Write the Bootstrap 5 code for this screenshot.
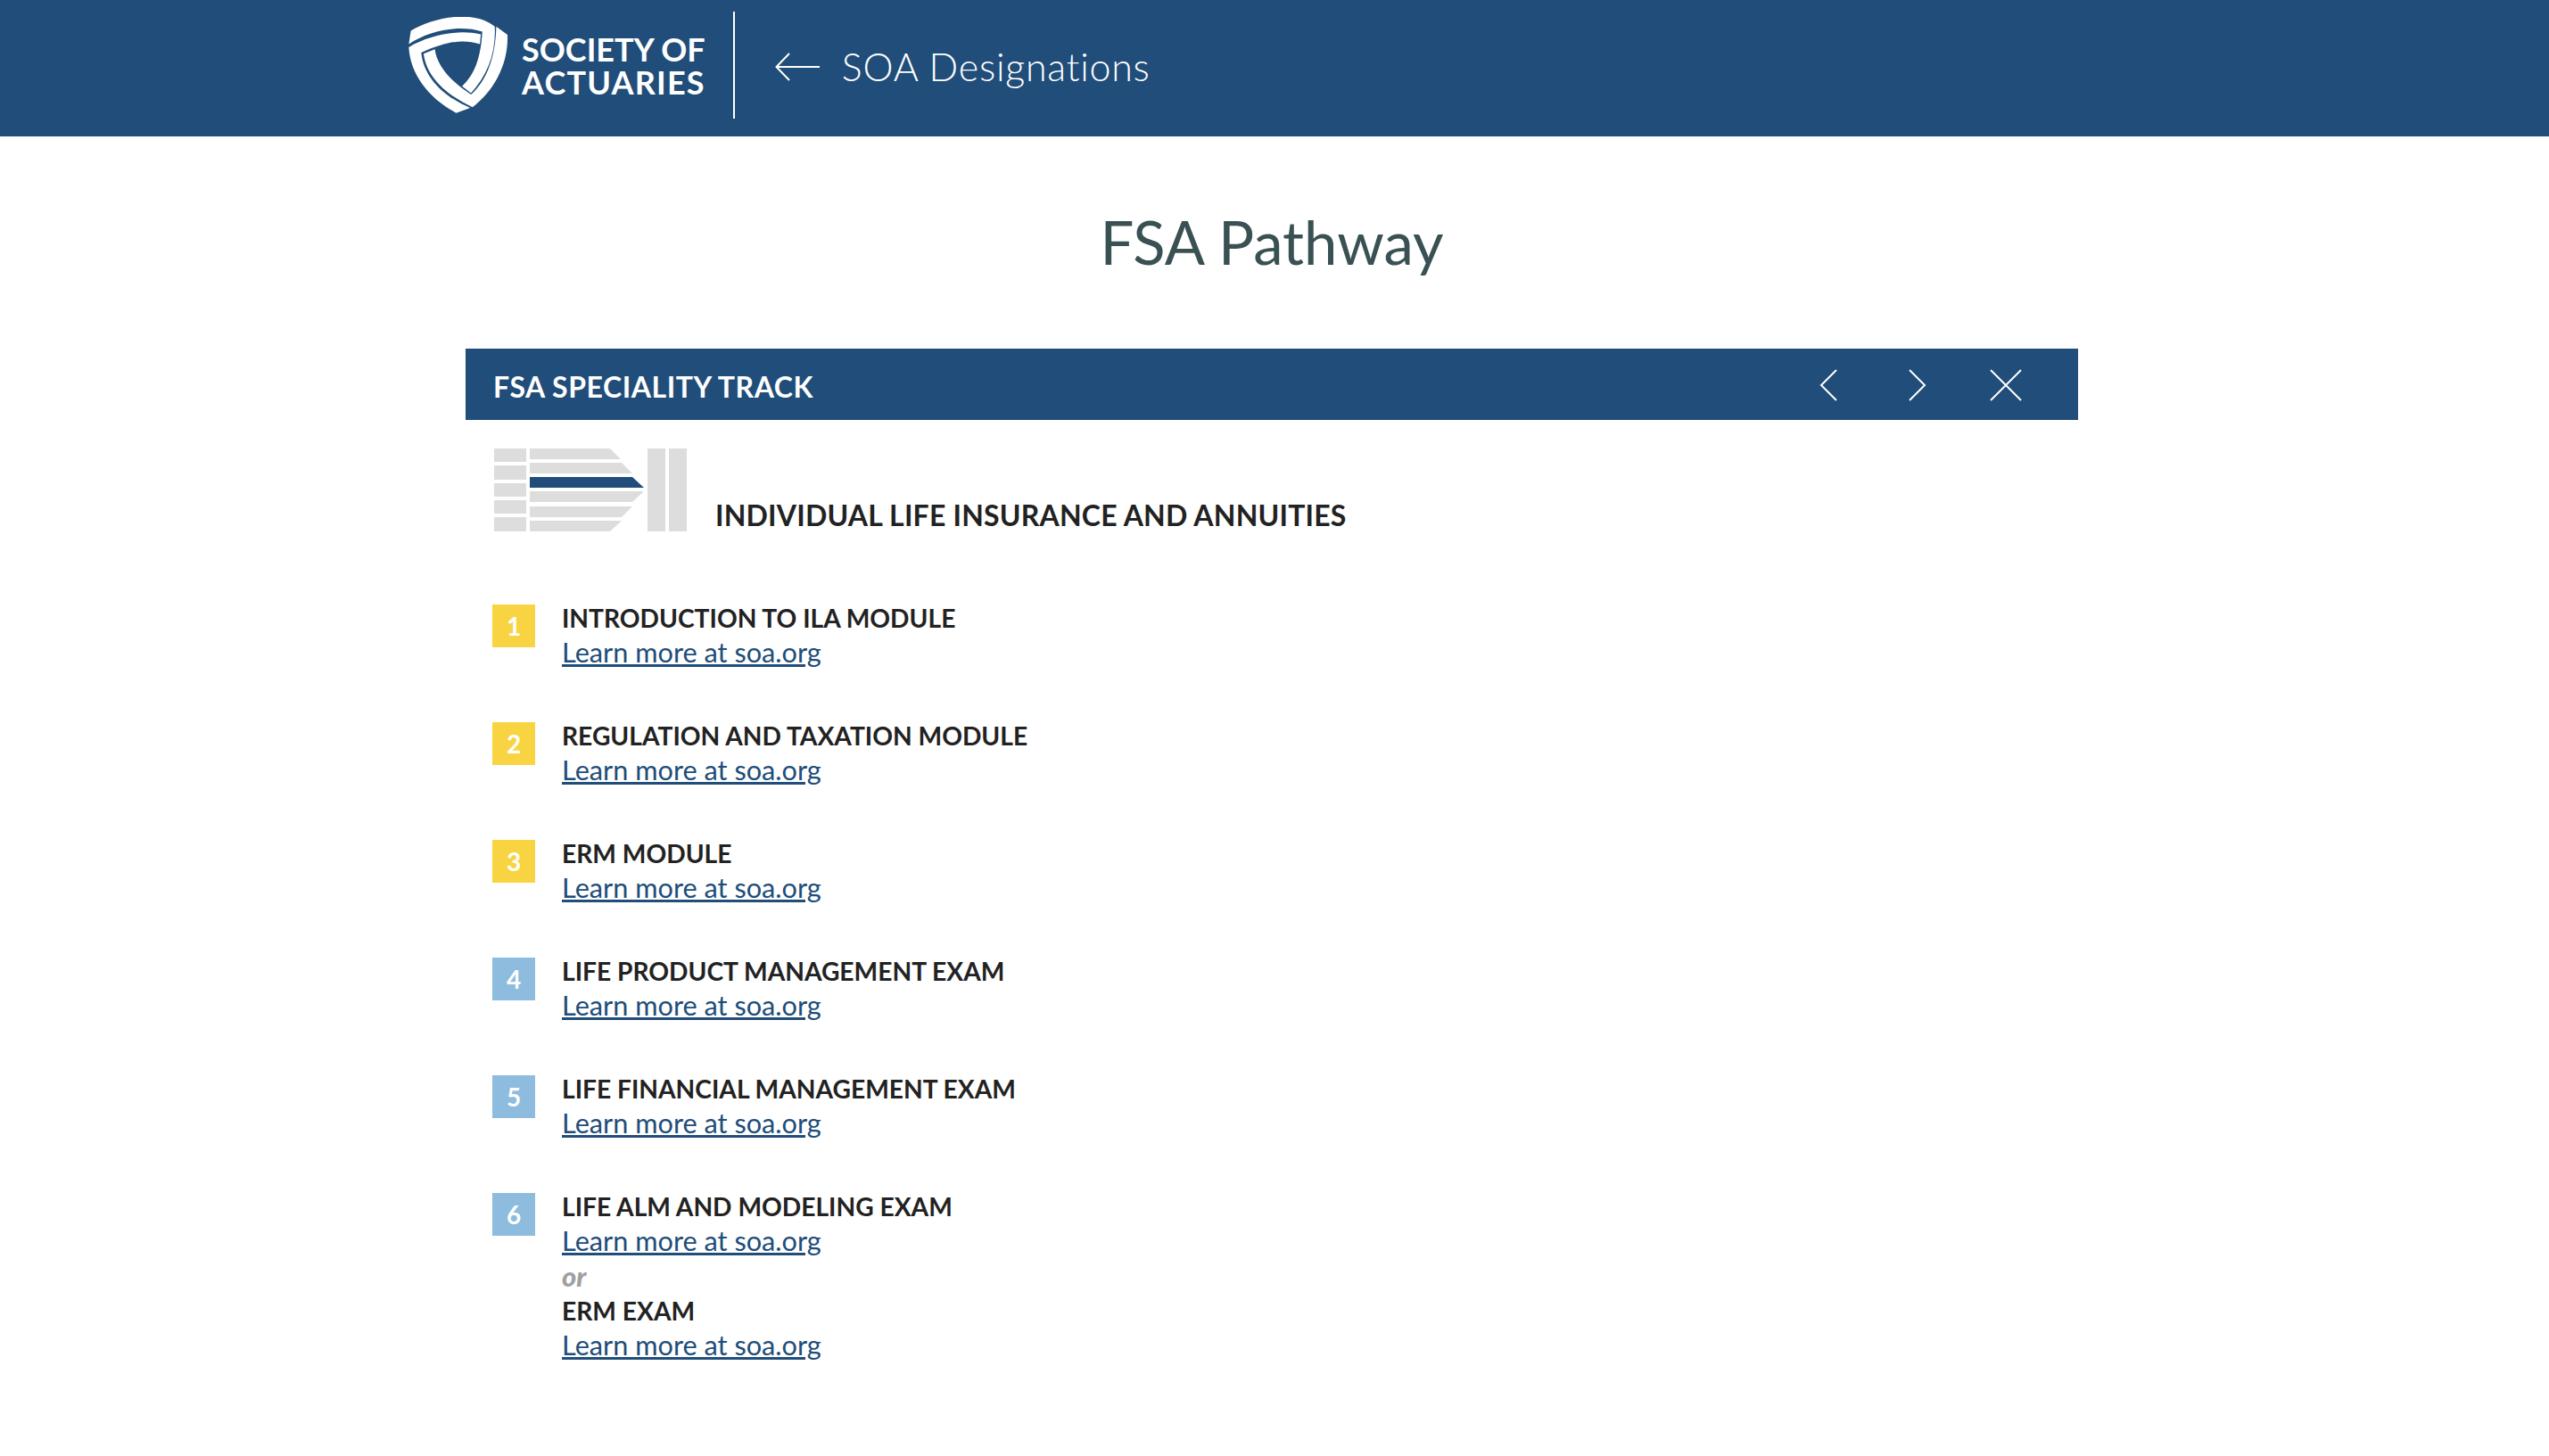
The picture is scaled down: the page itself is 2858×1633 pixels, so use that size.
<!DOCTYPE html>
<html lang="en">
<head>
    <meta charset="UTF-8">
    <title>FSA Pathway</title>
    <link href="https://cdn.jsdelivr.net/npm/bootstrap@5.3.0/dist/css/bootstrap.min.css" rel="stylesheet">
    <style>
        body { font-family: "Lato", "Liberation Sans", sans-serif; color: #222; background: #fff; }
        .soa-bar { background: #204d79; height: 153px; padding-left: 458px; padding-bottom: 3px; }
        .soa-shield { width: 112px; height: 108px; margin-bottom: 4px; }
        .soa-wordmark { margin-left: 15px; margin-bottom: 3px; color: #fff; font-weight: 700; font-size: 36px; line-height: 37px; }
        .soa-wordmark span { display: block; }
        .soa-wordmark .soa-word-wide { letter-spacing: 1.200px; }
        .soa-divider { width: 2px; height: 120px; background: #fff; margin-left: 31px; margin-bottom: 4px; }
        .soa-back { margin-left: 45px; }
        .soa-back-label { margin-left: 25px; color: #fff; font-weight: 300; font-size: 43px; letter-spacing: 0.750px; }
        .soa-title { font-size: 67px; font-weight: 400; color: #3a5154; margin: 0; padding: 77px 6px 79px 0; line-height: 82px; text-align: center; }
        .soa-panel { width: 1808px; margin-left: 522px; }
        .soa-panel-head { background: #204d79; height: 80px; padding: 0 63px 0 31px; color: #fff; }
        .soa-panel-title { font-size: 32px; font-weight: 700; line-height: 1; letter-spacing: 0.550px; padding-top: 6px; }
        .soa-panel-tools { padding-top: 2px; }
        .soa-next { margin-left: 80px; }
        .soa-close { margin-left: 71px; }
        .soa-track { padding: 32px 0 0 32px; }
        .soa-track-name { font-size: 32px; font-weight: 700; line-height: 1; letter-spacing: 0.200px; margin: 0 0 0 32px; padding-bottom: 2px; }
        .soa-steps { margin: 82px 0 0 30px; padding: 0; list-style: none; }
        .soa-step { height: 132px; }
        .soa-step-last { height: auto; }
        .soa-num { width: 48px; height: 48px; color: #fff; font-size: 28px; font-weight: 700; margin-right: 30px; flex: none; }
        .soa-yellow { background: #f9d442; }
        .soa-blue { background: #8dbcde; }
        .soa-lines { font-size: 30.700px; line-height: 39.500px; margin-top: -4px; }
        .soa-lines b { display: block; font-weight: 700; font-size: 28.200px; line-height: 38px; }
        .soa-lines a { color: #204d79; display: block; width: max-content; }
        .soa-or { color: #a0a0a0; font-style: italic; font-weight: 900; font-size: 31px; }
    </style>
</head>
<body>
<!-- Top bar -->
<nav class="soa-bar d-flex align-items-center">
    <svg class="soa-shield" viewBox="55 28 335 325" fill="#fff">
        <path d="M55 120 L62 75 C130 32 270 0 345 60 C350 150 320 225 265 285 L235 262 C275 225 298 170 303 78 C230 55 130 70 55 120 Z"/>
        <path d="M55 130 C130 85 230 70 298 87 L295 120 C240 103 190 108 97 148 C105 230 170 295 262 335 L215 352 C120 300 60 220 55 130 Z"/>
        <path d="M105 152 L143 137 C150 190 190 240 265 290 C320 240 348 160 350 60 L388 88 C392 190 340 280 270 333 C180 290 115 230 105 152 Z"/>
    </svg>
    <div class="soa-wordmark"><span>SOCIETY OF</span><span class="soa-word-wide">ACTUARIES</span></div>
    <div class="soa-divider"></div>
    <svg class="soa-back" width="50" height="32" viewBox="0 0 50 32" fill="none" stroke="#fff" stroke-width="2">
        <path d="M50 16 H2 M16 1 L1.500 16 L16 31"/>
    </svg>
    <span class="soa-back-label">SOA Designations</span>
</nav>

<h1 class="soa-title">FSA Pathway</h1>

<div class="soa-panel">
    <div class="soa-panel-head d-flex align-items-center justify-content-between">
        <span class="soa-panel-title">FSA SPECIALITY TRACK</span>
        <div class="soa-panel-tools d-flex align-items-center">
            <svg width="20" height="36" viewBox="0 0 20 36" fill="none" stroke="#fff" stroke-width="2"><path d="M19 1 L2 18 L19 35"/></svg>
            <svg class="soa-next" width="20" height="36" viewBox="0 0 20 36" fill="none" stroke="#fff" stroke-width="2"><path d="M1 1 L18 18 L1 35"/></svg>
            <svg class="soa-close" width="36" height="36" viewBox="0 0 36 36" fill="none" stroke="#fff" stroke-width="2"><path d="M1 1 L35 35 M35 1 L1 35"/></svg>
        </div>
    </div>

    <div class="soa-track d-flex align-items-end">
        <svg width="216" height="93" viewBox="554 503 216 93" fill="#ddd">
            <rect x="554" y="503" width="36" height="15"/>
            <rect x="554" y="522" width="36" height="16"/>
            <rect x="554" y="542" width="36" height="15"/>
            <rect x="554" y="561" width="36" height="15"/>
            <rect x="554" y="580" width="36" height="16"/>
            <polygon points="594,503 684,503 696,515 594,515"/>
            <polygon points="594,519 697,519 709,531 594,531"/>
            <polygon points="594,535 709,535 722,547 594,547" fill="#204d79"/>
            <polygon points="594,551 722,551 709,563 594,563"/>
            <polygon points="594,568 709,568 697,580 594,580"/>
            <polygon points="594,584 697,584 684,596 594,596"/>
            <rect x="726" y="503" width="20" height="93"/>
            <rect x="750" y="503" width="20" height="93"/>
        </svg>
        <h2 class="soa-track-name">INDIVIDUAL LIFE INSURANCE AND ANNUITIES</h2>
    </div>

    <ul class="soa-steps">
        <li class="soa-step d-flex"><span class="soa-num soa-yellow d-flex align-items-center justify-content-center">1</span><div class="soa-lines"><b>INTRODUCTION TO ILA MODULE</b><a href="#">Learn more at soa.org</a></div></li>
        <li class="soa-step d-flex"><span class="soa-num soa-yellow d-flex align-items-center justify-content-center">2</span><div class="soa-lines"><b>REGULATION AND TAXATION MODULE</b><a href="#">Learn more at soa.org</a></div></li>
        <li class="soa-step d-flex"><span class="soa-num soa-yellow d-flex align-items-center justify-content-center">3</span><div class="soa-lines"><b>ERM MODULE</b><a href="#">Learn more at soa.org</a></div></li>
        <li class="soa-step d-flex"><span class="soa-num soa-blue d-flex align-items-center justify-content-center">4</span><div class="soa-lines"><b>LIFE PRODUCT MANAGEMENT EXAM</b><a href="#">Learn more at soa.org</a></div></li>
        <li class="soa-step d-flex"><span class="soa-num soa-blue d-flex align-items-center justify-content-center">5</span><div class="soa-lines"><b>LIFE FINANCIAL MANAGEMENT EXAM</b><a href="#">Learn more at soa.org</a></div></li>
        <li class="soa-step soa-step-last d-flex"><span class="soa-num soa-blue d-flex align-items-center justify-content-center">6</span><div class="soa-lines"><b>LIFE ALM AND MODELING EXAM</b><a href="#">Learn more at soa.org</a><div class="soa-or">or</div><b>ERM EXAM</b><a href="#">Learn more at soa.org</a></div></li>
    </ul>
</div>
<script src="https://cdn.jsdelivr.net/npm/bootstrap@5.3.0/dist/js/bootstrap.bundle.min.js"></script>
</body>
</html>
